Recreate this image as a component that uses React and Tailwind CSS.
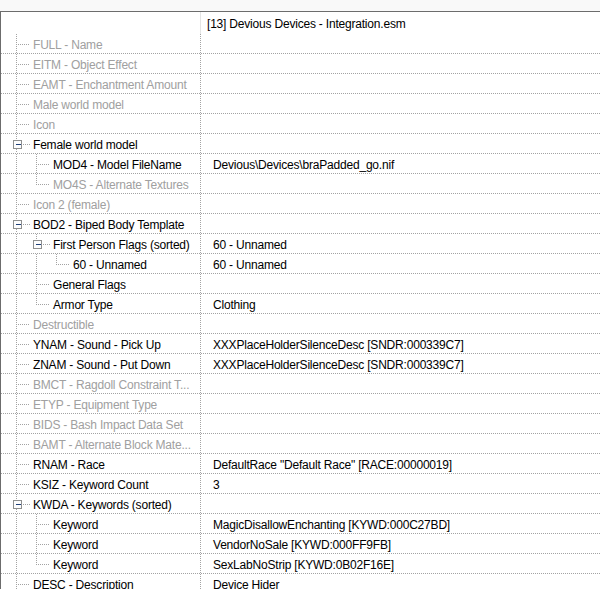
import React from "react";

const tree = [
  { name: "FULL - Name", dim: true },
  { name: "EITM - Object Effect", dim: true },
  { name: "EAMT - Enchantment Amount", dim: true },
  { name: "Male world model", dim: true },
  { name: "Icon", dim: true },
  {
    name: "Female world model",
    children: [
      { name: "MOD4 - Model FileName", value: "Devious\\Devices\\braPadded_go.nif" },
      { name: "MO4S - Alternate Textures", dim: true },
    ],
  },
  { name: "Icon 2 (female)", dim: true },
  {
    name: "BOD2 - Biped Body Template",
    children: [
      {
        name: "First Person Flags (sorted)",
        value: "60 - Unnamed",
        children: [{ name: "60 - Unnamed", value: "60 - Unnamed" }],
      },
      { name: "General Flags" },
      { name: "Armor Type", value: "Clothing" },
    ],
  },
  { name: "Destructible", dim: true },
  { name: "YNAM - Sound - Pick Up", value: "XXXPlaceHolderSilenceDesc [SNDR:000339C7]" },
  { name: "ZNAM - Sound - Put Down", value: "XXXPlaceHolderSilenceDesc [SNDR:000339C7]" },
  { name: "BMCT - Ragdoll Constraint T...", dim: true },
  { name: "ETYP - Equipment Type", dim: true },
  { name: "BIDS - Bash Impact Data Set", dim: true },
  { name: "BAMT - Alternate Block Mate...", dim: true },
  { name: "RNAM - Race", value: 'DefaultRace "Default Race" [RACE:00000019]' },
  { name: "KSIZ - Keyword Count", value: "3" },
  {
    name: "KWDA - Keywords (sorted)",
    children: [
      { name: "Keyword", value: "MagicDisallowEnchanting [KYWD:000C27BD]" },
      { name: "Keyword", value: "VendorNoSale [KYWD:000FF9FB]" },
      { name: "Keyword", value: "SexLabNoStrip [KYWD:0B02F16E]" },
    ],
  },
  { name: "DESC - Description", value: "Device Hider" },
];

// flatten the tree, keeping which ancestor lines still run down
const flatten = (items, level = 0, open = [], out = []) => {
  items.forEach((item, i) => {
    const last = level > 0 && i === items.length - 1;
    out.push({ ...item, level, last, open, hasKids: !!item.children });
    if (item.children) flatten(item.children, level + 1, [...open, !last], out);
  });
  return out;
};

const rows = flatten(tree);
const DOT = "#a3a3a3";

const Guides = ({ row }) => {
  const w = 32 + row.level * 20;
  const cx = 15 + row.level * 20;
  return (
    <svg width={w} height="19" className="shrink-0" shapeRendering="crispEdges">
      {row.open.map((on, a) =>
        on ? (
          <line key={a} x1={15.5 + a * 20} y1="0" x2={15.5 + a * 20} y2="19" stroke={DOT} strokeDasharray="1 1" />
        ) : null
      )}
      {row.hasKids ? (
        <g>
          <line x1={cx + 0.5} y1="0" x2={cx + 0.5} y2="6" stroke={DOT} strokeDasharray="1 1" />
          {row.level === 0 && (
            <line x1={cx + 0.5} y1="15" x2={cx + 0.5} y2="19" stroke={DOT} strokeDasharray="1 1" />
          )}
          <rect x={cx - 2.5} y="6.5" width="8" height="8" fill="#fdfdfd" stroke="#8e8f8f" />
          <rect x={cx} y="10" width="5" height="1" fill="#1f3f78" />
          <line x1={cx + 7} y1="10.5" x2={cx + 14} y2="10.5" stroke={DOT} strokeDasharray="1 1" />
        </g>
      ) : (
        <g>
          <line x1={cx + 0.5} y1="0" x2={cx + 0.5} y2={row.last ? 11 : 19} stroke={DOT} strokeDasharray="1 1" />
          <line x1={cx + 2} y1="10.5" x2={cx + 14} y2="10.5" stroke={DOT} strokeDasharray="1 1" />
        </g>
      )}
    </svg>
  );
};

export default function App() {
  return (
    <div
      className="w-[600px] h-[589px] overflow-hidden bg-white text-[12px] leading-none tracking-[-0.2px]"
      style={{ fontFamily: '"Liberation Sans", Arial, sans-serif' }}
    >
      <div className="h-[12px] bg-[#f9f9f9] border-b border-[#6c6c6c]" />
      <div className="border-l border-[#6c6c6c] h-full">
        <div className="flex h-[22px]">
          <div className="w-[200px] shrink-0 border-r border-[#e4e4e4]" />
          <div className="flex items-center pl-[6px] pt-[2px] text-black">[13] Devious Devices - Integration.esm</div>
        </div>
        {rows.map((row, i) => (
          <div key={i} className="flex h-[20px] border-b border-dotted border-[#a3a3a3]">
            <div className="w-[200px] shrink-0 flex items-center overflow-hidden whitespace-nowrap border-r border-dotted border-[#a3a3a3]">
              <Guides row={row} />
              <span className={"pt-[2px] " + (row.dim ? "text-[#a0a0a0]" : "text-black")}>{row.name}</span>
            </div>
            <div className="flex items-center pl-[12px] pt-[2px] whitespace-nowrap text-black">{row.value}</div>
          </div>
        ))}
      </div>
    </div>
  );
}
